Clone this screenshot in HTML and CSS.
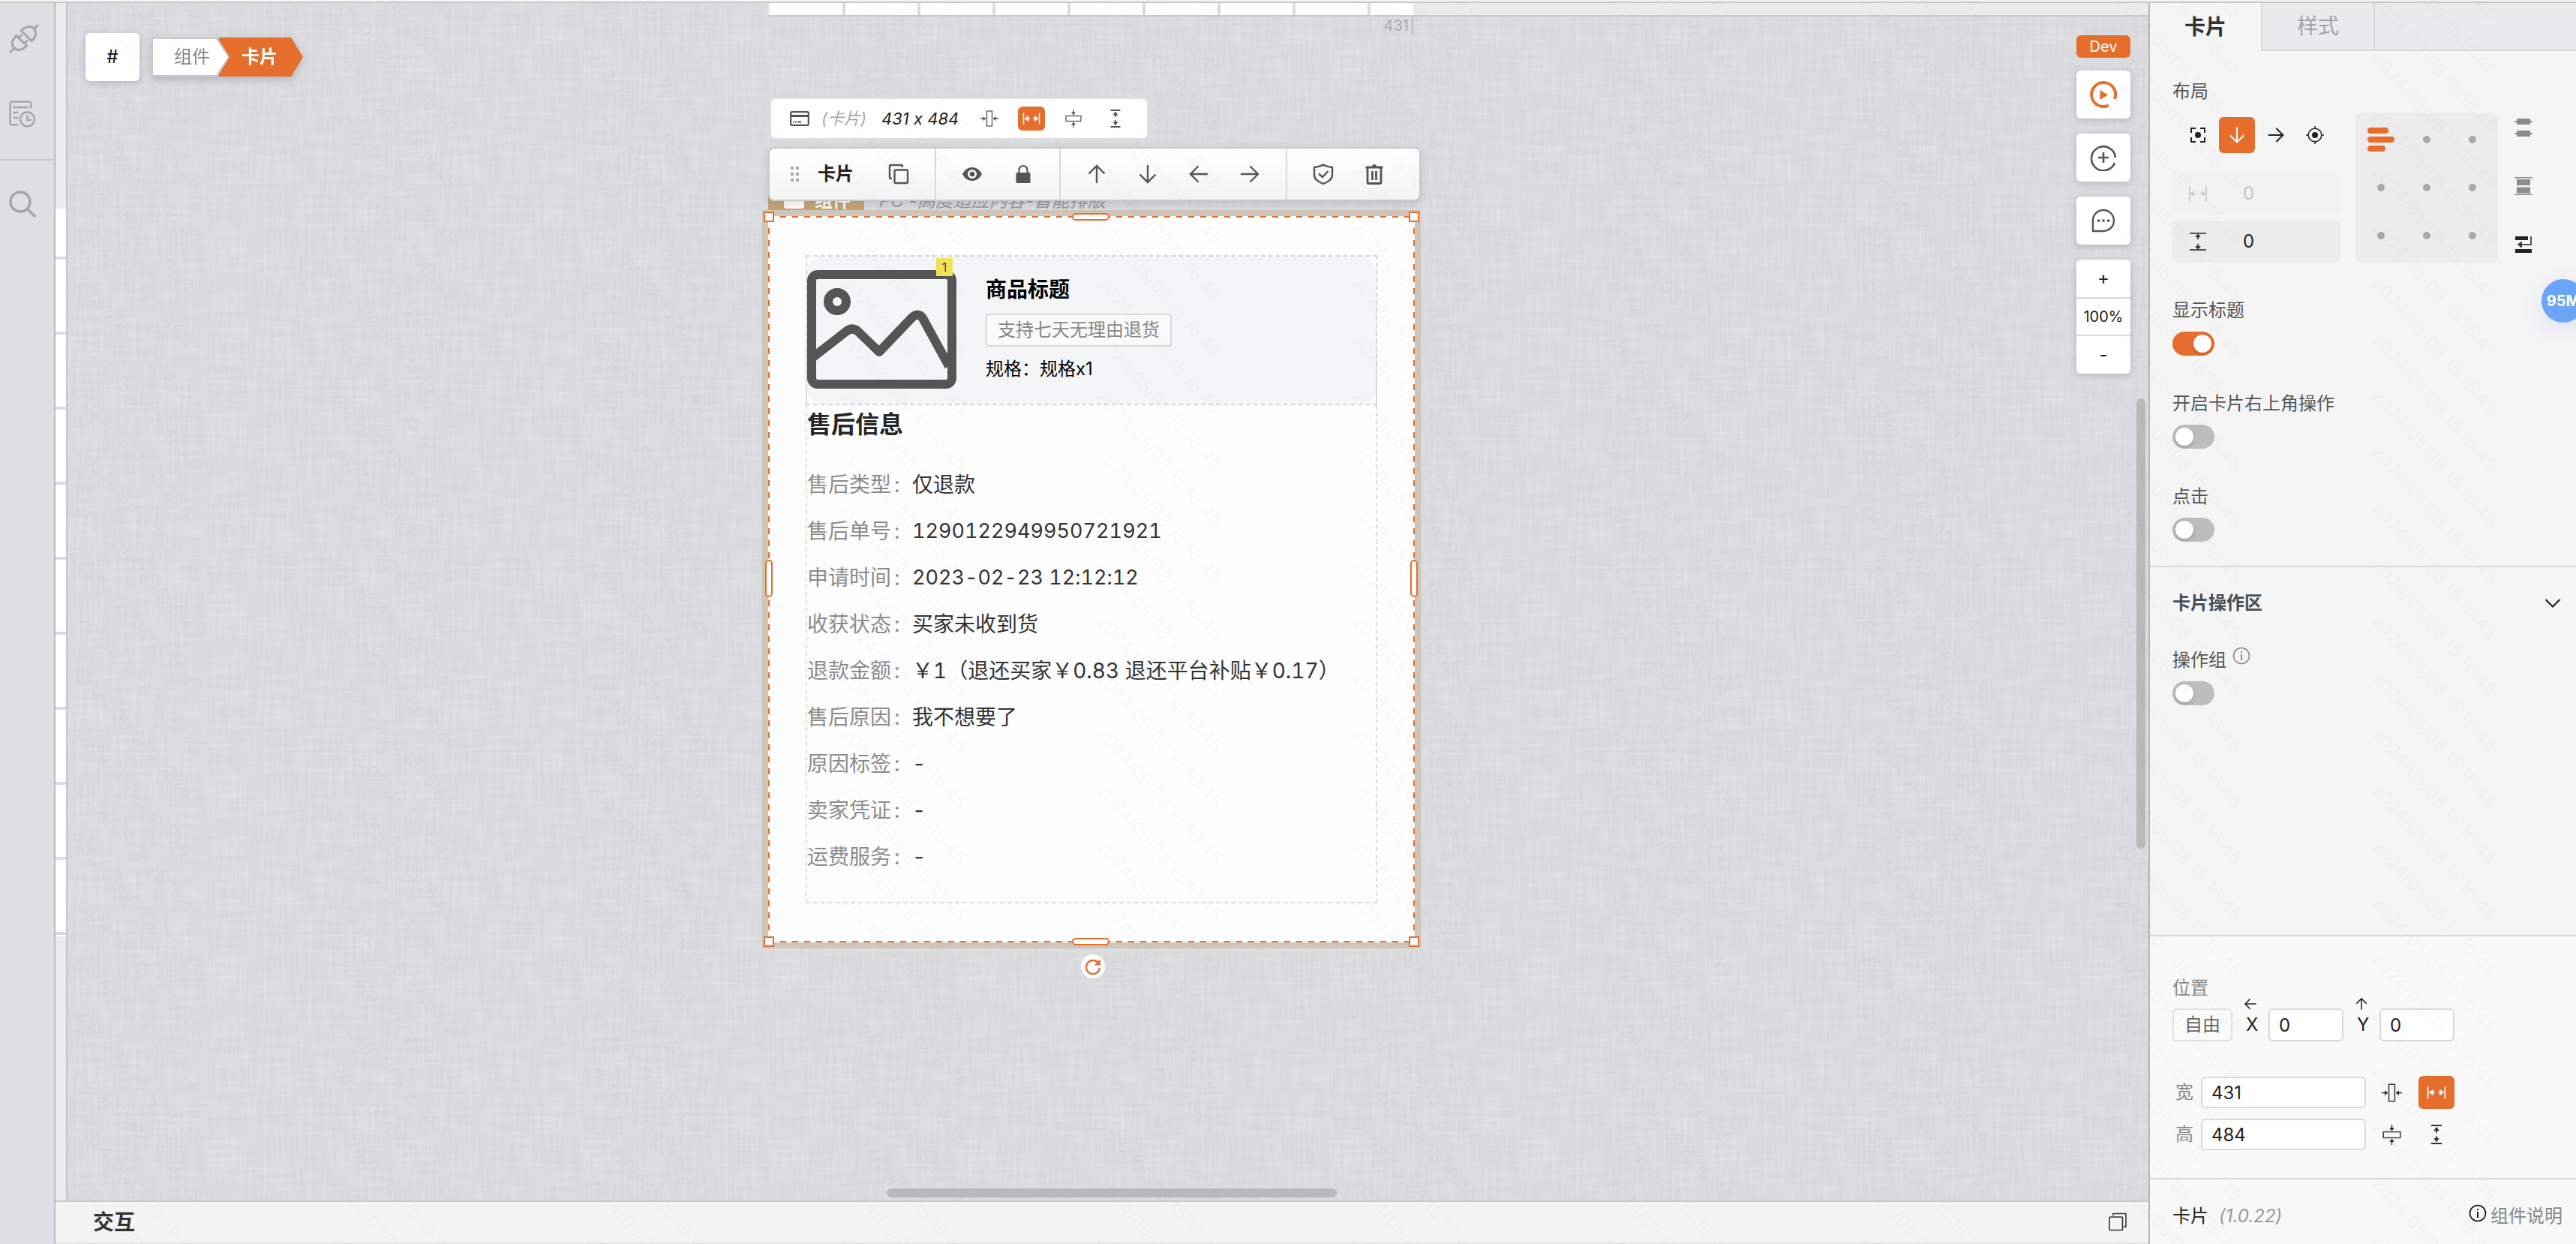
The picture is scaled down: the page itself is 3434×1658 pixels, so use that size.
FILE: index.html
```html
<!DOCTYPE html>
<html lang="zh-CN">
<head>
<meta charset="utf-8">
<title>卡片</title>
<link rel="stylesheet" href="styles.css">
</head>
<body>
<svg width="0" height="0" class="sprite" aria-hidden="true">
  <symbol id="fit-w" viewBox="0 0 24 24"><g fill="none" stroke="currentColor" stroke-width="1.3"><rect x="8.5" y="2" width="7" height="20"/><path d="M0 12h6M24 12h-6"/></g><path fill="currentColor" d="M3.500 9l4 3-4 3zM20.500 9l-4 3 4 3z"/></symbol>
  <symbol id="fill-w" viewBox="0 0 24 24"><g fill="none" stroke="currentColor" stroke-width="1.500"><path d="M1.500 4.500v15M22.500 4.500v15M4 12h6M20 12h-6"/></g><path fill="currentColor" d="M8 8l-5.500 4 5.500 4zM16 8l5.500 4-5.500 4z"/></symbol>
  <symbol id="fit-h" viewBox="0 0 24 24"><g fill="none" stroke="currentColor" stroke-width="1.300"><rect x="2" y="8.500" width="20" height="7"/><path d="M12 0v6M12 24v-6"/></g><path fill="currentColor" d="M9 3.500l3 4 3-4zM9 20.500l3-4 3 4z"/></symbol>
  <symbol id="fill-h" viewBox="0 0 24 24"><g fill="none" stroke="currentColor" stroke-width="1.800"><path d="M5.500 1h13M5.500 23h13M12 4v6M12 20v-6"/></g><path fill="currentColor" d="M8.500 7.500l3.500-5 3.500 5zM8.500 16.500l3.500 5 3.500-5z"/></symbol>
  <symbol id="arrow" viewBox="0 0 28 28"><path d="M14 26V3M3.500 13.500L14 3l10.500 10.500" fill="none" stroke="currentColor" stroke-width="2.400"/></symbol>
  <symbol id="info" viewBox="0 0 24 24"><circle cx="12" cy="12" r="10.500" fill="none" stroke="currentColor" stroke-width="1.600"/><path d="M12 10v8M12 6v2" stroke="currentColor" stroke-width="2"/></symbol>
</svg>

<div class="app">
  <nav class="rail" aria-label="工具">
    <div class="rail-group">
      <button class="rail-btn" aria-label="连接器"><svg width="40" height="40" viewBox="0 0 40 40" fill="none" stroke="currentColor" stroke-width="3"><path d="M1 38l6-6M39 1l-6 6M10 15.500L23.500 29C18 35.500 10 36 6.500 31.500C2.500 27.500 4 20.500 10 15.500zM30 22.500L16.500 9C22 2.500 30 2 33.500 6.500C37.500 10.500 36 17.500 30 22.500zM13 18.500l4.500-4.500M20.500 26l4.500-4.500"/></svg></button>
      <button class="rail-btn" aria-label="历史记录"><svg width="36" height="36" viewBox="0 0 36 36" fill="none" stroke="currentColor" stroke-width="2.400"><path d="M29 10V4q0-2.500-2.500-2.500h-23Q1.500 1.500 1.500 4v26q0 2.500 2.500 2.500h8M5.500 9h20M5.500 16h7M5.500 23h7"/><circle cx="24.500" cy="25" r="9.500"/><path d="M24.500 19.500V26h5.500"/></svg></button>
    </div>
    <button class="rail-btn search" aria-label="搜索"><svg width="36" height="36" viewBox="0 0 36 36" fill="none" stroke="currentColor" stroke-width="3.600"><circle cx="15" cy="15" r="13"/><path d="M24 24l11 11"/></svg></button>
  </nav>

  <main class="stage">
    <div class="workspace">
      <div class="ruler-v"><div class="ruler-v-range"></div></div>
      <div class="canvas">
        <div class="ruler-h"><div class="ruler-h-range"></div></div>
        <span class="ruler-mark">431</span>

        <div class="path">
          <button class="hash">#</button>
          <nav class="crumbs" aria-label="层级"><a class="crumb" href="#c"><span>组件</span></a><a class="crumb current" href="#k">卡片</a></nav>
        </div>

        <div class="frame-tag"><span class="tag-name"><i></i>组件</span><em>PC -高度适应内容-智能排版</em></div>

        <article class="card">
          <div class="card-body">
            <section class="product">
              <div class="product-in">
                <div class="thumb">
                  <svg width="200" height="158" viewBox="0 0 200 158" fill="none" stroke="#555" stroke-width="12"><rect x="6" y="6" width="187" height="146" rx="8"/><circle cx="40" cy="42" r="12"/><path d="M8 116L53 81q7-5 14 0l29 28 43-45q9-9 15 0l35 64" stroke-linejoin="round"/></svg>
                  <span class="count">1</span>
                </div>
                <div class="product-text">
                  <h3>商品标题</h3>
                  <span class="chip">支持七天无理由退货</span>
                  <p>规格：规格x1</p>
                </div>
              </div>
            </section>
            <h2>售后信息</h2>
            <dl class="facts">
              <div><dt>售后类型<b>:</b></dt><dd>仅退款</dd></div>
              <div><dt>售后单号<b>:</b></dt><dd class="num">1290122949950721921</dd></div>
              <div><dt>申请时间<b>:</b></dt><dd class="num">2023-02-23 12:12:12</dd></div>
              <div><dt>收获状态<b>:</b></dt><dd>买家未收到货</dd></div>
              <div><dt>退款金额<b>:</b></dt><dd>￥1（退还买家￥0.83 退还平台补贴￥0.17）</dd></div>
              <div><dt>售后原因<b>:</b></dt><dd>我不想要了</dd></div>
              <div><dt>原因标签<b>:</b></dt><dd>-</dd></div>
              <div><dt>卖家凭证<b>:</b></dt><dd>-</dd></div>
              <div><dt>运费服务<b>:</b></dt><dd>-</dd></div>
            </dl>
          </div>
          <i class="knob tl"></i><i class="knob tr"></i><i class="knob bl"></i><i class="knob br"></i>
          <i class="grip top"></i><i class="grip bottom"></i><i class="grip left-side"></i><i class="grip right-side"></i>
          <button class="rotate" aria-label="旋转"><svg width="22" height="22" viewBox="0 0 22 22"><path d="M18.500 7A9 9 0 1 0 20 13" fill="none" stroke="currentColor" stroke-width="2.400"/><path d="M21 1v8.500h-8.500z" fill="currentColor"/></svg></button>
        </article>

        <div class="size-bar">
          <svg width="26" height="20" viewBox="0 0 26 20"><rect x="1.200" y="1.200" width="23.600" height="17.600" rx="1.500" fill="none" stroke="currentColor" stroke-width="2.200"/><path d="M1 6.500h24" stroke="currentColor" stroke-width="3"/><path d="M4 14.500h2M7 14.500h1.500M10 14.500h5" stroke="currentColor" stroke-width="2"/></svg>
          <em class="kind">(卡片)</em>
          <em class="dims">431 x 484</em>
          <div class="size-modes">
            <button aria-label="宽度适应"><svg width="24" height="24"><use href="#fit-w"/></svg></button>
            <button class="on" aria-label="宽度填充"><svg width="24" height="24"><use href="#fill-w"/></svg></button>
            <button aria-label="高度适应"><svg width="24" height="24"><use href="#fit-h"/></svg></button>
            <button aria-label="高度填充"><svg width="24" height="24"><use href="#fill-h"/></svg></button>
          </div>
        </div>

        <div class="toolbar">
          <div class="tool-group first">
            <svg width="12" height="20" viewBox="0 0 12 20" fill="#aaa"><path d="M0 0h4v4H0zM7 0h4v4H7zM0 8h4v4H0zM7 8h4v4H7zM0 16h4v4H0zM7 16h4v4H7z"/></svg>
            <strong>卡片</strong>
            <button aria-label="复制"><svg width="28" height="28" viewBox="0 0 28 28" fill="none" stroke="currentColor" stroke-width="2.400"><rect x="8.500" y="8.500" width="17.500" height="17.500" rx="1.500"/><path d="M5 20H3.500Q2 20 2 18.500v-15Q2 2 3.500 2h14Q19 2 19 3.500V5"/></svg></button>
          </div>
          <div class="tool-group">
            <button aria-label="显示"><svg width="28" height="28" viewBox="0 0 28 28"><path fill="currentColor" fill-rule="evenodd" d="M14 5c6 0 10.500 4 13 9-2.500 5-7 9-13 9S3.500 19 1 14c2.500-5 7-9 13-9zm0 3a6 6 0 1 0 0 12 6 6 0 0 0 0-12zm0 2.700a3.300 3.300 0 1 1 0 6.600 3.300 3.300 0 0 1 0-6.600z"/></svg></button>
            <button aria-label="锁定"><svg width="28" height="28" viewBox="0 0 28 28"><rect x="4.500" y="12" width="19" height="14" rx="1.500" fill="currentColor"/><path d="M8.500 12V8.500a5.500 5.500 0 0 1 11 0V12" fill="none" stroke="currentColor" stroke-width="2.200"/></svg></button>
          </div>
          <div class="tool-group">
            <button aria-label="上移"><svg width="28" height="28"><use href="#arrow"/></svg></button>
            <button aria-label="下移"><svg class="down" width="28" height="28"><use href="#arrow"/></svg></button>
            <button aria-label="左移"><svg class="left" width="28" height="28"><use href="#arrow"/></svg></button>
            <button aria-label="右移"><svg class="right" width="28" height="28"><use href="#arrow"/></svg></button>
          </div>
          <div class="tool-group">
            <button aria-label="权限"><svg width="28" height="28" viewBox="0 0 28 28" fill="none" stroke="currentColor" stroke-width="2.400"><path d="M14 1.500Q18 4 26 5v10c0 6-5 9-12 12C7 24 2 21 2 15V5q8-1 12-3.500z"/><path d="M8 13.500l5 4.500 7.500-8"/></svg></button>
            <button aria-label="删除"><svg width="28" height="28" viewBox="0 0 28 28" fill="none" stroke="currentColor" stroke-width="2.800"><path d="M2.500 5h23M5 5v20q0 1.500 1.500 1.500h15q1.500 0 1.500-1.500V5M11.500 10v12M16.500 10v12" /><path d="M11 4q0-3 3-3t3 3z" fill="currentColor" stroke="none"/></svg></button>
          </div>
        </div>

        <aside class="side-actions">
          <span class="dev">Dev</span>
          <button class="play" aria-label="预览"><svg width="36" height="36" viewBox="0 0 36 36"><path d="M25 32.500A16 16 0 1 1 33 24" fill="none" stroke="currentColor" stroke-width="4"/><path d="M13.500 12l10.500 6.500-10.500 6.500z" fill="currentColor"/></svg></button>
          <button aria-label="新增"><svg width="36" height="36" viewBox="0 0 36 36" fill="none" stroke="currentColor" stroke-width="2.600"><path d="M33 25A16 16 0 1 1 34 18M18 11v14M11 18h14"/></svg></button>
          <button aria-label="评论"><svg width="32" height="32" viewBox="0 0 32 32"><path d="M2 30V15.500A14 14 0 1 1 16 30z" fill="none" stroke="currentColor" stroke-width="2.400"/><path d="M8 14.500h3.200v3.200H8zM14.400 14.500h3.200v3.200h-3.200zM21 14.500h3.200v3.200H21z" fill="currentColor"/></svg></button>
          <div class="zoom"><button>+</button><output>100%</output><button>-</button></div>
        </aside>
        <div class="scroll-v"></div>
        <div class="scroll-h"></div>
      </div>
    </div>
    <footer class="dock">
      <strong>交互</strong>
      <button aria-label="展开"><svg width="26" height="26" viewBox="0 0 26 26" fill="none" stroke="currentColor" stroke-width="1.600"><rect x="2" y="6" width="17.500" height="17.500" rx="1"/><path d="M7 4V1.500h17V19h-3"/></svg></button>
    </footer>
  </main>

  <aside class="panel">
    <div class="tabs" role="tablist"><button class="tab on" role="tab">卡片</button><button class="tab" role="tab">样式</button><span class="tab-rest"></span></div>
    <div class="props">
      <section class="block">
        <h4>布局</h4>
        <div class="layout">
          <div class="layout-left">
            <div class="flow">
              <button aria-label="自由"><svg width="24" height="24" viewBox="0 0 24 24"><path d="M3 9V3h6M15 3h6v6M21 15v6h-6M9 21H3v-6" fill="none" stroke="currentColor" stroke-width="2"/><circle cx="12" cy="12" r="4" fill="currentColor"/></svg></button>
              <button class="on" aria-label="纵向"><svg class="down" width="24" height="24"><use href="#arrow"/></svg></button>
              <button aria-label="横向"><svg class="right" width="24" height="24"><use href="#arrow"/></svg></button>
              <button aria-label="定位"><svg width="24" height="24" viewBox="0 0 24 24"><path d="M12 0v4M12 20v4M0 12h4M20 12h4" stroke="currentColor" stroke-width="1.600"/><circle cx="12" cy="12" r="8.800" fill="none" stroke="currentColor" stroke-width="1.600"/><circle cx="12" cy="12" r="4" fill="currentColor"/></svg></button>
            </div>
            <label class="gap off"><svg width="24" height="24" viewBox="0 0 24 24" fill="none" stroke="currentColor" stroke-width="1.500"><path d="M1 1v22M23 1v22M9 12H3M6 9l-3 3 3 3M15 12h6M18 9l3 3-3 3"/></svg><input value="0" aria-label="水平间距" disabled></label>
            <label class="gap"><svg width="24" height="24" viewBox="0 0 24 24" fill="none" stroke="currentColor" stroke-width="1.600"><path d="M1 1h22M1 23h22M12 9V3M9 6l3-3 3 3M12 15v6M9 18l3 3 3-3"/></svg><input value="0" aria-label="垂直间距"></label>
          </div>
          <div class="align">
            <button class="on" aria-label="左上"><i></i><i></i><i></i></button><button aria-label="上"></button><button aria-label="右上"></button>
            <button aria-label="左"></button><button aria-label="中"></button><button aria-label="右"></button>
            <button aria-label="左下"></button><button aria-label="下"></button><button aria-label="右下"></button>
          </div>
          <div class="spread">
            <svg width="24" height="24" viewBox="0 0 24 24" fill="#8c8c8c"><path d="M0 3h24v2H0zM0 19h24v2H0zM3 0h18v8H3zM3 16h18v8H3z"/></svg>
            <svg width="24" height="24" viewBox="0 0 24 24" fill="#8c8c8c"><path d="M0 0h24v1.500H0zM0 22.500h24V24H0zM3 3h18v8H3zM3 13.500h18v8H3z"/></svg>
            <svg width="24" height="24" viewBox="0 0 24 24" fill="#222"><path d="M1 1h17v5H1zM1 18h22v5H1z"/><path d="M22 1v11H7M9 9l-4 3 4 3z" fill="none" stroke="#222" stroke-width="1.500"/></svg>
          </div>
        </div>
        <label class="switch"><span>显示标题</span><input type="checkbox" checked></label>
        <label class="switch"><span>开启卡片右上角操作</span><input type="checkbox"></label>
        <label class="switch"><span>点击</span><input type="checkbox"></label>
      </section>
      <section class="block second">
        <header><h5>卡片操作区</h5><button aria-label="收起"><svg width="22" height="12" viewBox="0 0 22 12"><path d="M1.500 1L11 10.500 20.500 1" fill="none" stroke="#222" stroke-width="2.200"/></svg></button></header>
        <label class="switch"><span>操作组 <svg class="hint" width="24" height="24"><use href="#info"/></svg></span><input type="checkbox"></label>
      </section>
    </div>
    <section class="geometry">
      <h4>位置</h4>
      <div class="pos">
        <button class="free">自由</button>
        <label class="axis"><svg class="left" width="18" height="18"><use href="#arrow"/></svg><span>X</span><input value="0"></label>
        <label class="axis"><svg width="18" height="18"><use href="#arrow"/></svg><span>Y</span><input value="0"></label>
      </div>
      <div class="size"><label><span>宽</span><input value="431"></label><button aria-label="适应"><svg width="27" height="27"><use href="#fit-w"/></svg></button><button class="on" aria-label="填充"><svg width="26" height="26"><use href="#fill-w"/></svg></button></div>
      <div class="size"><label><span>高</span><input value="484"></label><button aria-label="适应"><svg width="27" height="27"><use href="#fit-h"/></svg></button><button aria-label="填充"><svg width="26" height="26"><use href="#fill-h"/></svg></button></div>
    </section>
    <footer class="about"><span>卡片</span><em>(1.0.22)</em><a href="#doc"><svg width="24" height="24"><use href="#info"/></svg>组件说明</a></footer>
    <div class="memory">95M</div>
  </aside>
</div>
</body>
</html>
```
FILE: styles.css
```css
* { box-sizing: border-box; }
:root { --orange: #e66e2c; --line: #d9d9d9; }
html, body { height: 100%; }
body { margin: 0; overflow: hidden; font: 24px/32px Inter, "Noto Sans CJK SC", sans-serif; font-variant-ligatures: no-contextual; color: #222; background: #f5f5f4; }
h2, h3, h4, h5, p, dl, dd { margin: 0; }
h4, h5 { font-size: 24px; font-weight: 400; }
button { display: flex; align-items: center; justify-content: center; margin: 0; padding: 0; border: 0; background: none; color: inherit; font: inherit; cursor: pointer; }
input { min-width: 0; margin: 0; font: inherit; color: inherit; }
a { color: inherit; text-decoration: none; }
svg { display: block; flex: none; }
.sprite { position: absolute; }
.down { transform: rotate(180deg); }
.left { transform: rotate(-90deg); }
.right { transform: rotate(90deg); }

.app { position: relative; display: grid; grid-template-columns: 74px 1fr 570px; grid-template-rows: minmax(0, 1fr); height: 100%; padding-top: 2px; }
.app::after { content: ""; position: absolute; inset: 0; pointer-events: none; background: url("data:image/svg+xml,%3Csvg xmlns='http://www.w3.org/2000/svg' width='340' height='75'%3E%3Cg font-family='Inter' font-size='24' fill='%23000' fill-opacity='.014'%3E%3Ctext transform='translate(100 -72) rotate(48)'%3E2024/05/08 15:16:45%3C/text%3E%3Ctext transform='translate(100 3) rotate(48)'%3E2024/05/08 15:16:45%3C/text%3E%3Ctext transform='translate(100 -147) rotate(48)'%3E2024/05/08 15:16:45%3C/text%3E%3C/g%3E%3C/svg%3E"); }

/* left rail */
.rail { border-top: 2px solid #c9c9c9; border-right: 2px solid #bbb; background: #dddfe3; color: #a6a6a6; }
.rail-group { display: flex; flex-direction: column; gap: 62px; padding: 28px 0 42px 12px; border-bottom: 2px solid #c9cacc; }
.rail-group .rail-btn { width: 40px; justify-content: flex-start; }
.search { padding: 40px 0 0 12px; }

/* stage */
.stage { display: flex; flex-direction: column; min-width: 0; border-top: 2px solid #c9c9c9; }
.workspace { flex: 1; display: flex; min-height: 0; }
.ruler-v { width: 16px; padding-top: 274px; border-right: 2px solid #c6c6c6; background: #ebebeb; }
.ruler-v-range { height: 970px; background: linear-gradient(#fff 96px, #dcdcdc 96px) 0 -32px / 100% 100px; }
.canvas {
  position: relative; flex: 1; min-width: 0; overflow: hidden; background-color: #d6d8db;
  background-image:
    url("data:image/svg+xml,%3Csvg xmlns='http://www.w3.org/2000/svg' width='250' height='242'%3E%3Cfilter id='f' x='0' y='0' width='100%25' height='100%25'%3E%3CfeTurbulence type='fractalNoise' baseFrequency='.25 .016' numOctaves='2' seed='4' stitchTiles='stitch'/%3E%3CfeColorMatrix values='0 0 0 0 .9 0 0 0 0 .9 0 0 0 0 .94 1.4 0 0 0 -.5'/%3E%3C/filter%3E%3Crect width='250' height='242' filter='url(%23f)' opacity='.34'/%3E%3C/svg%3E"),
    url("data:image/svg+xml,%3Csvg xmlns='http://www.w3.org/2000/svg' width='250' height='242'%3E%3Cfilter id='f' x='0' y='0' width='100%25' height='100%25'%3E%3CfeTurbulence type='fractalNoise' baseFrequency='.016 .25' numOctaves='2' seed='9' stitchTiles='stitch'/%3E%3CfeColorMatrix values='0 0 0 0 .9 0 0 0 0 .9 0 0 0 0 .94 1.4 0 0 0 -.5'/%3E%3C/filter%3E%3Crect width='250' height='242' filter='url(%23f)' opacity='.26'/%3E%3C/svg%3E");
}
.ruler-h { margin-left: 934px; height: 18px; padding-left: 3px; border-bottom: 2px solid #c9c9c9; background: #ebebeb; }
.ruler-h-range { width: 857px; height: 16px; background: repeating-linear-gradient(90deg, #fff 0 96px, #dcdcdc 96px 100px); }
.ruler-mark { position: absolute; left: 1750px; top: 18px; width: 44px; padding-right: 4px; border-right: 2px solid #b9b9b9; font-size: 20px; line-height: 24px; text-align: right; color: #a9a9a9; }

.path { position: absolute; left: 24px; top: 40px; display: flex; align-items: center; gap: 16px; }
.hash { width: 72px; height: 64px; border-radius: 6px; background: #fff; box-shadow: 0 2px 10px rgba(80, 85, 110, .3); font-weight: 500; }
.crumbs { display: flex; filter: drop-shadow(0 4px 6px rgba(80, 85, 110, .3)); }
.crumb { position: relative; z-index: 1; width: 104px; height: 52px; background: #c9c9c9; clip-path: polygon(0 0, 88px 0, 100% 50%, 88px 100%, 0 100%); color: #888; }
.crumb span { display: block; margin: 2px; height: 48px; padding-left: 28px; line-height: 48px; background: #fff; clip-path: polygon(0 0, 84px 0, 100% 50%, 84px 100%, 0 100%); }
.crumb.current { z-index: 0; width: 112px; margin-left: -14px; padding-left: 30px; line-height: 52px; background: var(--orange); clip-path: polygon(0 0, 96px 0, 100% 50%, 96px 100%, 0 100%); color: #fff; font-weight: 700; }

.frame-tag { position: absolute; left: 934px; top: 244px; display: flex; gap: 20px; height: 40px; line-height: 40px; color: #999; }
.tag-name { display: flex; align-items: center; gap: 14px; width: 128px; padding-left: 21px; background: #c4a472; color: #fff; font-weight: 700; }
.tag-name i { width: 27px; height: 20px; border-radius: 4px; background: #fff; }

.card {
  position: absolute; left: 934px; top: 284px; width: 862px; padding: 52px 50px;
  background:
    repeating-linear-gradient(90deg, var(--orange) 0 8px, transparent 8px 16px) top / 100% 2px no-repeat,
    repeating-linear-gradient(90deg, var(--orange) 0 8px, transparent 8px 16px) bottom / 100% 2px no-repeat,
    repeating-linear-gradient(var(--orange) 0 8px, transparent 8px 16px) left / 2px 100% no-repeat,
    repeating-linear-gradient(var(--orange) 0 8px, transparent 8px 16px) right / 2px 100% no-repeat,
    #fdfdfd;
  box-shadow: 0 0 0 8px #cfc6b9;
}
.card-body { height: 864px; border: 2px dashed #dedede; border-top: 0; }
.product { height: 200px; margin: 0 -2px; border: 2px dashed #d6d6d6; }
.product-in { display: flex; gap: 39px; height: 196px; padding-top: 18px; border-radius: 20px; background: #f4f5f7; }
.thumb { position: relative; width: 199px; }
.count { position: absolute; left: 172px; top: -16px; width: 22px; height: 24px; background: #f2e256; font-size: 16px; line-height: 24px; text-align: center; color: #444; }
.product-text { display: flex; flex-direction: column; align-items: flex-start; padding-top: 6px; color: #000; }
h3 { font-size: 28px; line-height: 40px; }
.chip { margin: 12px 0 14px; padding: 0 14px; border: 2px solid var(--line); border-radius: 4px; background: #fafafa; line-height: 40px; color: #888; }
h2 { padding-top: 2px; font-size: 32px; line-height: 48px; color: #262626; }
.facts { padding-top: 25px; font-size: 28px; line-height: 62px; font-variant-numeric: tabular-nums; }
.facts div { display: flex; }
.facts dt { width: 140px; color: #8c8c8c; }
.facts b { margin-left: 4px; font-weight: 400; }
.facts dd { color: #333; white-space: nowrap; }
.facts .num { font-size: 27px; }
.knob, .grip, .rotate { position: absolute; background: #fff; }
.knob { width: 14px; height: 14px; border: 2px solid var(--orange); }
.knob.tl, .knob.tr { top: -6px; }
.knob.bl, .knob.br { bottom: -6px; }
.knob.tl, .knob.bl { left: -6px; }
.knob.tr, .knob.br { right: -6px; }
.grip { width: 50px; height: 10px; border: 2px solid var(--orange); border-radius: 5px; }
.grip.top, .grip.bottom { left: calc(50% - 26px); }
.grip.top { top: -4px; }
.grip.bottom { bottom: -4px; }
.grip.left-side, .grip.right-side { width: 10px; height: 50px; top: calc(50% - 26px); }
.grip.left-side { left: -4px; }
.grip.right-side { right: -4px; }
.rotate { left: calc(50% - 14px); bottom: -48px; width: 32px; height: 32px; border-radius: 50%; color: var(--orange); }

.size-bar { position: absolute; left: 936px; top: 126px; display: flex; align-items: center; height: 56px; padding: 0 24px 0 25px; border: 2px solid #e0e0e2; border-radius: 8px; background: #fff; font-size: 22px; color: #555; }
.kind { margin: 0 20px 0 16px; color: #aaa; }
.dims { width: 110px; margin-right: 16px; color: #222; white-space: nowrap; }
.size-modes { display: flex; gap: 20px; }
.size-modes button { width: 36px; height: 32px; border-radius: 6px; }
button.on { background: var(--orange); color: #fff; }

.toolbar { position: absolute; left: 934px; top: 192px; display: flex; height: 72px; border: 2px solid #c9c9c9; border-radius: 8px; background: linear-gradient(#fff, #f3f3f3); box-shadow: 0 4px 12px rgba(80, 85, 110, .2); color: #555; }
.tool-group { display: flex; align-items: center; padding: 0 14px; }
.tool-group + .tool-group { border-left: 2px solid var(--line); }
.tool-group:last-child { padding-right: 26px; }
.tool-group.first { padding-left: 28px; }
.tool-group strong { margin: 0 26px 0 24px; color: #222; }
.tool-group button { width: 68px; height: 68px; }

.side-actions { position: absolute; right: 24px; top: 43px; display: flex; flex-direction: column; gap: 20px; width: 72px; color: #555; }
.side-actions > button, .zoom { border-radius: 6px; background: #fff; box-shadow: 0 2px 10px rgba(80, 85, 110, .3); }
.side-actions > button { height: 64px; }
.side-actions > .play { color: var(--orange); }
.dev { height: 30px; margin-bottom: -3px; border-radius: 6px; background: var(--orange); font-size: 20px; line-height: 30px; text-align: center; color: #fff; }
.zoom { display: flex; flex-direction: column; color: #222; }
.zoom button { height: 50px; }
.zoom output { border: solid var(--line); border-width: 2px 0; font-size: 20px; line-height: 48px; text-align: center; }
.scroll-v, .scroll-h { position: absolute; border-radius: 6px; background: #b9b9b9; }
.scroll-v { right: 4px; top: 527px; width: 12px; height: 600px; }
.scroll-h { left: 1092px; bottom: 4px; width: 600px; height: 12px; }

.dock { display: flex; align-items: center; justify-content: space-between; height: 58px; padding: 0 28px 0 50px; border-top: 2px solid #c9c9c9; border-bottom: 2px solid #e4e4e4; background: #f4f4f4; font-size: 28px; color: #333; }

/* property panel */
.panel { position: relative; display: flex; flex-direction: column; min-width: 0; border-top: 2px solid #c9c9c9; border-left: 2px solid #b7b7b7; background: #f5f5f5; }
.tabs { display: flex; height: 64px; font-size: 28px; }
.tab { width: 150px; border: solid var(--line); border-width: 0 2px 2px 0; background: #e8eaec; color: #a3a3a3; }
.tab.on { border-bottom: 0; background: none; color: #333; font-weight: 700; }
.tab-rest { flex: 1; border-bottom: 2px solid var(--line); background: #e8eaec; }
.props { flex: 1; color: #555; }
.block { padding: 38px 20px 32px 30px; }
.block.second { padding-top: 32px; border-top: 2px solid var(--line); }
.layout { display: flex; gap: 20px; height: 200px; margin-top: 12px; color: #222; }
.layout-left { display: flex; flex-direction: column; width: 224px; }
.flow { display: flex; gap: 4px; margin: 6px 0 26px; padding-left: 10px; }
.flow button { width: 48px; height: 48px; border-radius: 6px; }
.gap { display: flex; align-items: center; gap: 48px; height: 56px; padding-left: 22px; border-radius: 8px; background: #ececec; }
.gap.off { margin-bottom: 8px; background: #f2f2f2; color: #c4c4c4; }
.gap input { width: 100px; padding: 0; border: 0; background: none; }
.align { display: grid; grid-template-columns: repeat(3, 1fr); grid-template-rows: repeat(3, 64px); width: 190px; padding: 4px; border-radius: 8px; background: #ececec; }
.align button::before { content: ""; width: 10px; height: 10px; border-radius: 50%; background: #a8a8a8; }
.align .on { flex-direction: column; align-items: flex-start; gap: 4px; padding-left: 12px; background: none; }
.align .on::before { display: none; }
.align i { width: 28px; height: 8px; border-radius: 4px; background: var(--orange); }
.align i:nth-child(2) { width: 36px; }
.align i:nth-child(3) { width: 24px; }
.spread { display: flex; flex-direction: column; justify-content: space-between; margin-left: 2px; padding: 8px 0 12px; }
.switch { display: flex; flex-direction: column; align-items: flex-start; gap: 12px; margin-top: 48px; }
.switch span { display: flex; gap: 8px; }
.hint { color: #8c8c8c; margin-top: -2px; }
.switch input { appearance: none; display: flex; width: 56px; height: 32px; padding: 4px; border-radius: 16px; background: #bdbdbd; }
.switch input::before { content: ""; width: 24px; height: 24px; border-radius: 50%; background: #fff; box-shadow: 0 2px 4px rgba(0, 0, 0, .2); }
.switch input:checked { justify-content: flex-end; background: var(--orange); }
.second header { display: flex; justify-content: space-between; }
.second .switch { margin-top: 44px; }
h5 { font-weight: 700; color: #434f59; }

.geometry { padding: 53px 30px 37px; border-top: 2px solid var(--line); background: #f9f9f9; }
.geometry h4 { color: #888; }
.geometry input { height: 42px; padding: 0 12px; border: 2px solid var(--line); border-radius: 6px; background: #fff; }
.pos { display: flex; gap: 16px; margin: 11px 0 47px; }
.free { width: 80px; height: 44px; border: 2px solid #e2e2e2; border-radius: 6px; background: #fafafa; color: #666; }
.axis { position: relative; display: flex; align-items: center; color: #222; }
.axis svg { position: absolute; left: -1px; top: -15px; }
.axis span { width: 32px; padding-left: 2px; }
.geometry .pos input { width: 100px; height: 44px; }
.size { display: flex; align-items: center; height: 42px; }
.size + .size { margin-top: 14px; }
.size label { display: flex; align-items: center; }
.size span { width: 38px; padding-left: 4px; color: #888; }
.size input { width: 220px; }
.size button { width: 48px; height: 44px; margin-left: 12px; border-radius: 6px; color: #333; }
.size button:first-of-type { margin-left: 10px; }
.size button.on { color: #fff; }
.about { display: flex; gap: 14px; padding: 33px 18px 21px 30px; border-top: 2px solid var(--line); background: #f8f8f8; }
.about em { color: #999; }
.about a { display: flex; gap: 5px; margin-left: auto; color: #888; }
.about a svg { color: #111; }
.memory { position: absolute; right: -12px; top: 368px; width: 58px; height: 58px; border-radius: 50%; background: #6ba5f7; box-shadow: 0 8px 30px rgba(100, 100, 240, .15); font-size: 20px; font-weight: 700; line-height: 58px; text-align: center; color: #fff; }
```
